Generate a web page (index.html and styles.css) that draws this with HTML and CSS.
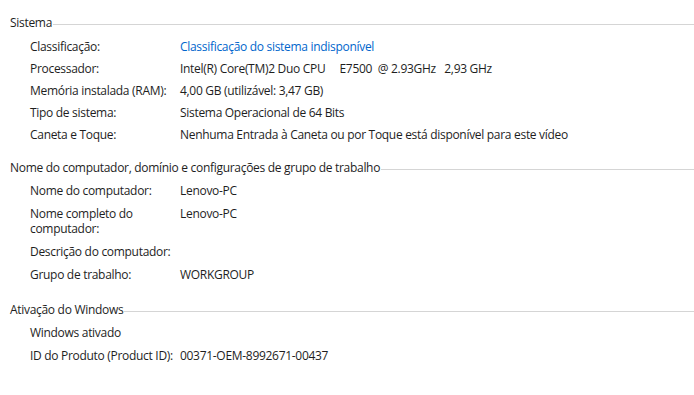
FILE: index.html
```html
<!DOCTYPE html>
<html>
<head>
    <title>Sistema</title>
    <link rel="stylesheet" href="styles.css">
</head>
<body>
    <div class="panel">
        <div class="section section-first">
            <div class="section-title"><span>Sistema</span></div>
            <div class="info-grid">
                <div class="label">Classificação:</div>
                <div class="value"><a href="#" class="link">Classificação do sistema indisponível</a></div>
                <div class="label">Processador:</div>
                <div class="value">Intel(R) Core(TM)2 Duo CPU&nbsp;&nbsp;&nbsp;&nbsp; E7500&nbsp; @ 2.93GHz&nbsp;&nbsp; 2,93 GHz</div>
                <div class="label">Memória instalada (RAM):</div>
                <div class="value">4,00 GB (utilizável: 3,47 GB)</div>
                <div class="label">Tipo de sistema:</div>
                <div class="value">Sistema Operacional de 64 Bits</div>
                <div class="label">Caneta e Toque:</div>
                <div class="value">Nenhuma Entrada à Caneta ou por Toque está disponível para este vídeo</div>
            </div>
        </div>
        <div class="section">
            <div class="section-title"><span>Nome do computador, domínio e configurações de grupo de trabalho</span></div>
            <div class="info-grid info-grid-loose">
                <div class="label">Nome do computador:</div>
                <div class="value">Lenovo-PC</div>
                <div class="label label-wrap">Nome completo do computador:</div>
                <div class="value">Lenovo-PC</div>
                <div class="label">Descrição do computador:</div>
                <div class="value"></div>
                <div class="label">Grupo de trabalho:</div>
                <div class="value">WORKGROUP</div>
            </div>
        </div>
        <div class="section section-last">
            <div class="section-title"><span>Ativação do Windows</span></div>
            <div class="info-grid info-grid-loose">
                <div class="label full">Windows ativado</div>
                <div class="label">ID do Produto (Product ID):</div>
                <div class="value">00371-OEM-8992671-00437</div>
            </div>
        </div>
    </div>
</body>
</html>
```

FILE: styles.css
```css
body {
    margin: 0;
    background-color: #ffffff;
    font-family: "Open Sans", "Noto Sans", sans-serif;
    font-size: 12px;
    letter-spacing: -0.3px;
    color: #1e1e1e;
}
.panel {
    padding: 15px 0 0 10px;
}
.section {
    margin-top: 18px;
}
.section-first {
    margin-top: 0;
}
.section-last {
    margin-top: 20px;
}
.section-title {
    display: flex;
    align-items: center;
    line-height: 15px;
}
.section-title::after {
    content: "";
    flex: 1;
    height: 1px;
    margin: 3px 0 0 1px;
    background-color: #d5d5d5;
}
.info-grid {
    display: grid;
    grid-template-columns: 150px 1fr;
    row-gap: 7px;
    padding: 9px 0 0 20px;
    line-height: 15px;
}
.info-grid-loose {
    row-gap: 8px;
    padding-top: 8px;
}
.label {
    white-space: nowrap;
}
.label-wrap {
    white-space: normal;
    padding-right: 30px;
}
.full {
    grid-column: 1 / 3;
}
.link {
    color: #0066cc;
    text-decoration: none;
}
```
